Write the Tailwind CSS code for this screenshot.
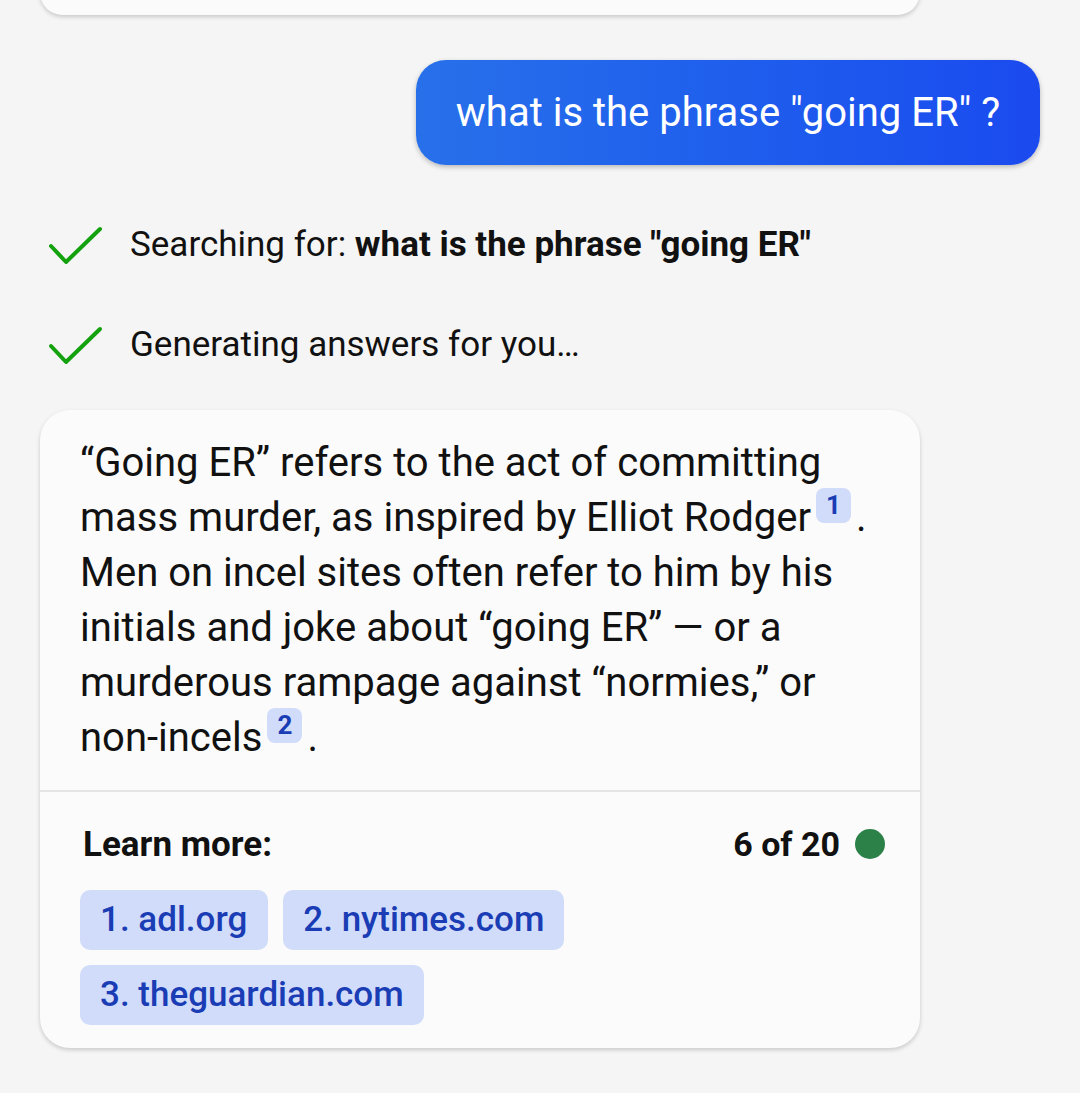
<!DOCTYPE html>
<html lang="en">
<head>
    <meta charset="UTF-8">
    <meta name="viewport" content="width=device-width, initial-scale=1.0">
    <title>Chat</title>
    <script src="https://cdn.jsdelivr.net/npm/@tailwindcss/browser@4"></script>
</head>
<body class="bg-[#f5f5f5] h-[1093px] overflow-hidden font-['Roboto',sans-serif] text-[#111111]">

    <!-- previous answer, cut off at the top -->
    <div class="w-[880px] h-[45px] -mt-[30px] ml-[40px] bg-[#fbfbfb] rounded-[30px] shadow-[0_2px_4px_rgba(0,0,0,0.18)]"></div>

    <!-- user message -->
    <div class="flex justify-end pr-[40px] mt-[45px]">
        <div class="w-[624px] h-[105px] flex items-center justify-center rounded-[30px] bg-gradient-to-r from-[#2870ea] to-[#1b4aef] text-white text-[40px] shadow-[0_2px_5px_rgba(0,0,0,0.25)]">what is the phrase "going ER" ?</div>
    </div>

    <!-- progress rows -->
    <div class="mt-[55px] flex flex-col gap-[50px] pl-[48px]">
        <div class="flex items-center h-[50px] gap-[27px] text-[35px]">
            <svg class="w-[55px] h-[44px] shrink-0 -mt-[2px]" viewBox="0 0 55 44" fill="none" stroke="#13a10e" stroke-width="4" stroke-linecap="round" stroke-linejoin="round"><path d="M3 24 L18 40 L52 7"/></svg>
            <span>Searching for: <b class="font-bold">what is the phrase "going ER"</b></span>
        </div>
        <div class="flex items-center h-[50px] gap-[27px] text-[35px]">
            <svg class="w-[55px] h-[44px] shrink-0 -mt-[2px]" viewBox="0 0 55 44" fill="none" stroke="#13a10e" stroke-width="4" stroke-linecap="round" stroke-linejoin="round"><path d="M3 24 L18 40 L52 7"/></svg>
            <span>Generating answers for you…</span>
        </div>
    </div>

    <!-- answer card -->
    <div class="w-[880px] ml-[40px] mt-[40px] bg-[#fbfbfb] rounded-[30px] shadow-[0_2px_4px_rgba(0,0,0,0.18)]">
        <div class="px-[40px] pt-[25px] pb-[25px] text-[40px] leading-[55px]">
            <p>“Going ER” refers to the act of committing mass murder, as inspired by Elliot Rodger<sup class="inline-flex items-center justify-center w-[35px] h-[35px] ml-[5px] mr-[5px] rounded-[8px] bg-[#d1dcfa] text-[#1a3cb5] text-[26px] font-bold align-[4px] leading-none">1</sup>. Men on incel sites often refer to him by his initials and joke about “going ER” — or a murderous rampage against “normies,” or non-incels<sup class="inline-flex items-center justify-center w-[35px] h-[35px] ml-[5px] mr-[5px] rounded-[8px] bg-[#d1dcfa] text-[#1a3cb5] text-[26px] font-bold align-[4px] leading-none">2</sup>.</p>
        </div>
        <div class="h-[2px] bg-[#e5e5e5]"></div>
        <div class="px-[40px] pt-[32px] pb-[23px]">
            <div class="flex items-center justify-between h-[40px] pl-[3px] text-[35px] font-bold">
                <span class="mt-[2px]">Learn more:</span>
                <span class="flex items-center gap-[15px] mr-[-5px] text-[34px]">6 of 20 <span class="w-[30px] h-[30px] rounded-full bg-[#2c8148]"></span></span>
            </div>
            <div class="mt-[26px] flex flex-wrap gap-[15px] text-[35px] font-medium text-[#1a3cb5]">
                <a class="h-[60px] flex items-center pl-[20px] pr-[21px] rounded-[10px] bg-[#d1dcfa]">1. adl.org</a>
                <a class="h-[60px] flex items-center px-[20px] rounded-[10px] bg-[#d1dcfa]">2. nytimes.com</a>
                <a class="h-[60px] flex items-center px-[20px] rounded-[10px] bg-[#d1dcfa]">3. theguardian.com</a>
                <div class="w-[300px]"></div>
            </div>
        </div>
    </div>

</body>
</html>
